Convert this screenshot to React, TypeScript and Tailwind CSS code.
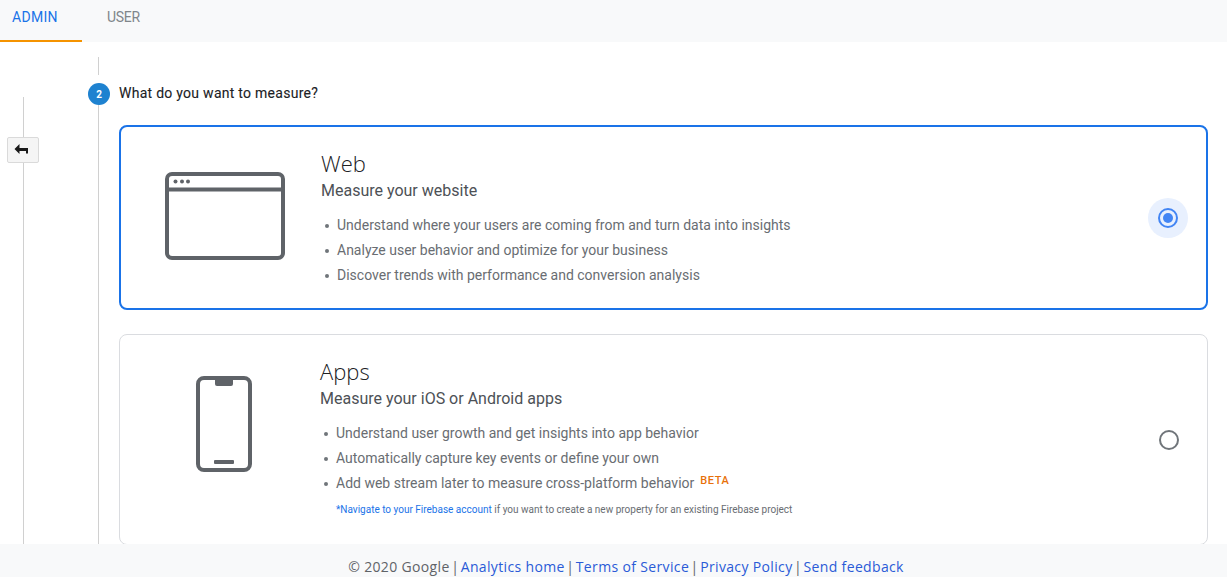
const ROBOTO = "font-['Roboto',sans-serif]";

function Bullet({ children }: { children: React.ReactNode }) {
  return (
    <li className="flex h-[25px] items-center text-[14px] text-[#696d72]">
      <span className="mr-[8px] ml-[4px] h-[4px] w-[4px] rounded-full bg-[#70757a]" />
      {children}
    </li>
  );
}

function Sep() {
  return <span className="mx-[1.5px] text-[#5f6368]">|</span>;
}

export default function App() {
  return (
    <div className={`flex h-[577px] w-[1227px] flex-col overflow-hidden bg-white ${ROBOTO}`}>
      <header className="flex h-[42px] shrink-0 bg-[#f8f9fa] text-[14px]">
        <div className="h-[42px] w-[82px] border-b-2 border-[#f59300] pt-[7px] pl-[12px] tracking-[0.3px] text-[#1a73e8]">ADMIN</div>
        <div className="pt-[7px] pl-[25px] tracking-[-0.3px] text-[#80868b]">USER</div>
      </header>

      <main className="relative flex h-[502px] shrink-0 overflow-hidden">
        <div className="ml-[23px] mt-[55px] w-px bg-[#d0d0d0]" />
        <button className="absolute left-[7px] top-[95px] flex h-[26px] w-[32px] items-center justify-center rounded-[2px] border border-[#dadada] bg-[#f5f5f5]">
          <svg className="mr-[4px]" width="14" height="12" viewBox="0 0 14 12">
            <path d="M.5 5 5.500 0v4H14v5.500h-2V7H5.500v3z" fill="#1a1a1a" />
          </svg>
        </button>

        <div className="ml-[64px] flex w-[22px] shrink-0 flex-col items-start">
          <div className="mt-[15px] ml-[10px] h-[18px] w-px bg-[#d0d0d0]" />
          <div className="mt-[8px] flex h-[22px] w-[22px] items-center justify-center rounded-full bg-[#1e82d0] text-[10px] font-bold text-white">2</div>
          <div className="ml-[10px] w-px flex-1 bg-[#d0d0d0]" />
        </div>

        <div className="ml-[9px] w-[1089px] shrink-0">
          <div className="mt-[41px] h-[20px] text-[14px] leading-[20px] tracking-[0.27px] text-[#202124] [-webkit-text-stroke:0.1px_#202124]">What do you want to measure?</div>

          <section className="mt-[22px] flex h-[185px] items-center rounded-[8px] border-2 border-[#1a73e8] pr-[18px]">
            <svg className="mb-[4px] ml-[44px] shrink-0" width="120" height="88" viewBox="0 0 120 88" fill="none">
              <rect x="2" y="2" width="116" height="84" rx="5" stroke="#5f6368" strokeWidth="4" />
              <path d="M2 17.500h116" stroke="#5f6368" strokeWidth="4" />
              <circle cx="10.500" cy="9.500" r="2" fill="#5f6368" />
              <circle cx="17" cy="9.500" r="2" fill="#5f6368" />
              <circle cx="23" cy="9.500" r="2" fill="#5f6368" />
            </svg>
            <div className="ml-[36px] flex-1 self-start pt-[22px]">
              <div className="font-['Open_Sans',sans-serif] text-[22px] leading-[28px] font-light text-[#202124]">Web</div>
              <div className="mt-[3px] text-[16px] leading-[22px] text-[#4d5156]">Measure your website</div>
              <ul className="mt-[11px]">
                <Bullet>Understand where your users are coming from and turn data into insights</Bullet>
                <Bullet>Analyze user behavior and optimize for your business</Bullet>
                <Bullet>Discover trends with performance and conversion analysis</Bullet>
              </ul>
            </div>
            <div className="flex h-[40px] w-[40px] shrink-0 items-center justify-center rounded-full bg-[#e8f0fe]">
              <div className="flex h-[20px] w-[20px] items-center justify-center rounded-full border-2 border-[#4285f4]">
                <div className="h-[10px] w-[10px] rounded-full bg-[#4285f4]" />
              </div>
            </div>
          </section>

          <section className="mt-[24px] flex h-[211px] items-start rounded-[8px] border border-[#dadce0] pr-[28px]">
            <svg className="mt-[41px] ml-[76px] shrink-0" width="56" height="96" viewBox="0 0 56 96" fill="none">
              <rect x="2" y="2" width="52" height="92" rx="6" stroke="#5f6368" strokeWidth="4" />
              <path d="M19 2h18v6a2 2 0 0 1-2 2H21a2 2 0 0 1-2-2z" fill="#5f6368" />
              <rect x="18" y="84" width="20" height="4" rx="1" fill="#5f6368" />
            </svg>
            <div className="ml-[68px] flex-1 pt-[22px]">
              <div className="font-['Open_Sans',sans-serif] text-[22px] leading-[28px] font-light text-[#202124]">Apps</div>
              <div className="mt-[3px] text-[16px] leading-[22px] text-[#4d5156]">Measure your iOS or Android apps</div>
              <ul className="mt-[11px]">
                <Bullet>Understand user growth and get insights into app behavior</Bullet>
                <Bullet>Automatically capture key events or define your own</Bullet>
                <Bullet>
                  Add web stream later to measure cross-platform behavior
                  <span className="mb-[7px] ml-[6px] text-[11px] leading-none font-medium tracking-[0.6px] text-[#e8710a]">BETA</span>
                </Bullet>
              </ul>
              <p className="mt-[7px] ml-[16px] text-[10px] leading-[14px] text-[#696d72]">
                <a className="text-[#1a73e8]">*Navigate to your Firebase account</a> if you want to create a new property for an existing Firebase project
              </p>
            </div>
            <div className="mt-[95px] h-[20px] w-[20px] shrink-0 rounded-full border-2 border-[#70757a]" />
          </section>
        </div>
      </main>

      <footer className="flex-1 bg-[#f8f9fa] pt-[13px] pl-[25px] text-center font-['Open_Sans',sans-serif] text-[14px] leading-[20px] tracking-[0.35px] whitespace-pre text-[#5f6368]">
        © 2020 Google<Sep /><a className="text-[#2a5bd7]">Analytics home</a><Sep /><a className="text-[#2a5bd7]">Terms of Service</a><Sep /><a className="text-[#2a5bd7]">Privacy Policy</a><Sep /><a className="text-[#2a5bd7]">Send feedback</a>
      </footer>
    </div>
  );
}
